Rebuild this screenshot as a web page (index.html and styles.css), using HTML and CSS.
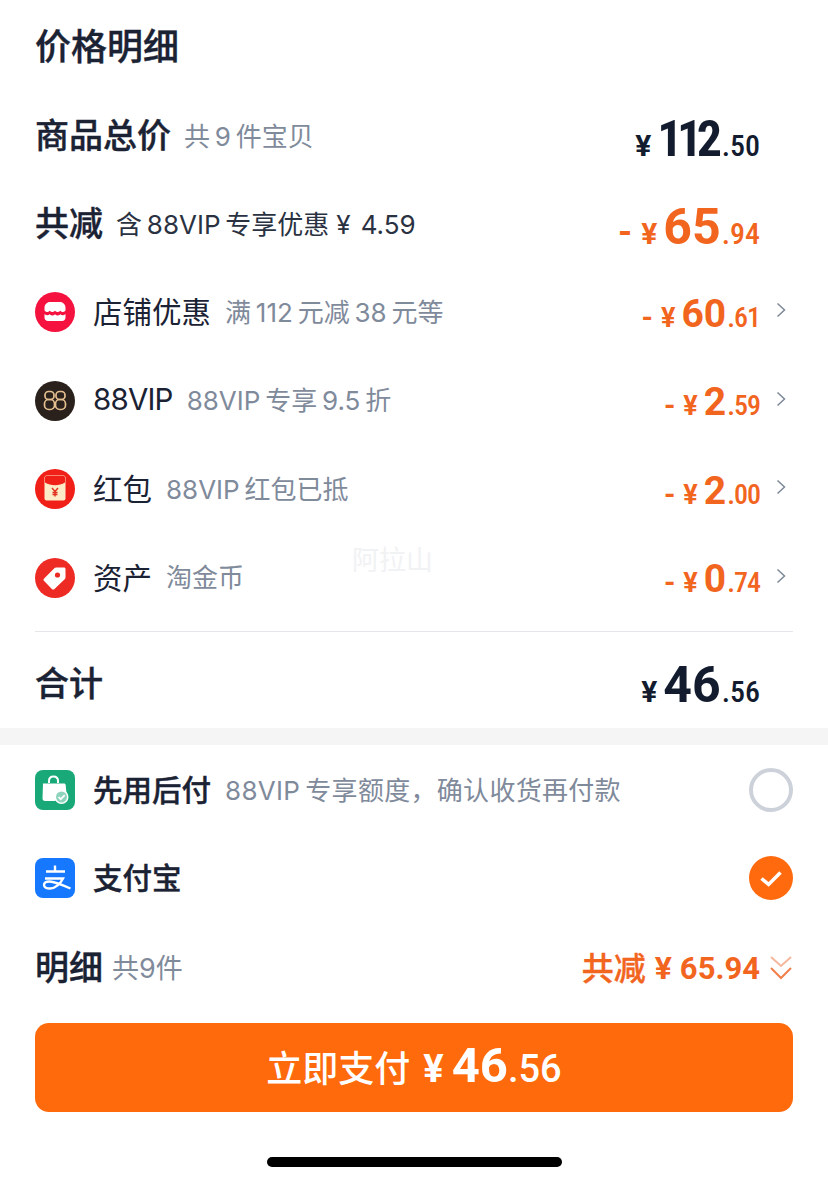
FILE: index.html
```html
<!DOCTYPE html>
<html lang="zh-CN">
<head>
<meta charset="utf-8">
<title>价格明细</title>
<link rel="stylesheet" href="styles.css">
</head>
<body>
<main class="page">
  <section class="panel">
    <h1 class="title">价格明细</h1>
    <div class="row row-main">
      <div class="label"><span class="strong">商品总价</span><span class="sub">共 9 件宝贝</span></div>
      <div class="amount amount-big dark"><span class="yen">¥</span><b class="tight">112</b><span class="dec">.50</span></div>
    </div>
    <div class="row row-main">
      <div class="label"><span class="strong">共减</span><span class="sub dark-sub">含 88VIP 专享优惠<span class="dark-yen">¥</span>4.59</span></div>
      <div class="amount amount-big orange"><span class="minus">-</span><span class="yen">¥</span><b>65</b><span class="dec">.94</span></div>
    </div>

    <div class="row row-item">
      <div class="label">
        <svg class="icon" viewBox="0 0 40 40"><circle cx="20" cy="20" r="20" fill="#f5123f"/><path d="M9.500 18.500V15.500C9.500 12.500 12 10 15 10h10c3 0 5.500 2.500 5.500 5.500v3c-1.700 2-3.500 2-5.200.3-1.700 1.700-3.600 1.700-5.300 0-1.700 1.700-3.600 1.700-5.300 0-1.700 1.700-3.500 1.700-5.200-.3z" fill="#fff"/><path d="M9.500 22c1.700 1.500 3.500 1.500 5.200.3 1.700 1.700 3.600 1.700 5.300 0 1.700 1.700 3.600 1.700 5.300 0 1.700 1.200 3.500 1.200 5.200-.3v3.500c0 2-1.500 3.500-3.500 3.500H13c-2 0-3.500-1.500-3.500-3.500z" fill="#fff"/></svg>
        <span class="name">店铺优惠</span><span class="sub">满 112 元减 38 元等</span>
      </div>
      <div class="amount-wrap">
        <div class="amount amount-small orange"><span class="minus">-</span><span class="yen">¥</span><b>60</b><span class="dec">.61</span></div>
        <svg class="chev" viewBox="0 0 10 16"><path d="M1.500 1.500 8.500 8l-7 6.500" fill="none" stroke="#7d8797" stroke-width="1.500"/></svg>
      </div>
    </div>

    <div class="row row-item">
      <div class="label">
        <svg class="icon" viewBox="0 0 40 40"><circle cx="20" cy="20" r="20" fill="#2a211d"/><g fill="none" stroke="#e5bf8f" stroke-width="1.700"><rect x="10" y="10.500" width="9" height="8" rx="3.500"/><rect x="9.500" y="18.500" width="10" height="10" rx="4.200"/><rect x="21" y="10.500" width="9" height="8" rx="3.500"/><rect x="20.500" y="18.500" width="10" height="10" rx="4.200"/></g></svg>
        <span class="name name-latin">88VIP</span><span class="sub">88VIP 专享 9.5 折</span>
      </div>
      <div class="amount-wrap">
        <div class="amount amount-small orange"><span class="minus">-</span><span class="yen">¥</span><b>2</b><span class="dec">.59</span></div>
        <svg class="chev" viewBox="0 0 10 16"><path d="M1.500 1.500 8.500 8l-7 6.500" fill="none" stroke="#7d8797" stroke-width="1.500"/></svg>
      </div>
    </div>

    <div class="row row-item">
      <div class="label">
        <svg class="icon" viewBox="0 0 40 40"><circle cx="20" cy="20" r="20" fill="#f01f17"/><rect x="9.500" y="6.500" width="21" height="25" rx="2" fill="#fdebc8"/><path d="M10 8.500c0-1 .6-1.500 1.500-1.500h17c.9 0 1.500.5 1.500 1.500v5c-6 3.500-14 3.500-20 0z" fill="#f01f17"/><path d="M17 19l3 3.500 3-3.500M20 22.500V27.500M17.500 23.500h5M17.500 25.500h5" fill="none" stroke="#e0301e" stroke-width="1.400"/></svg>
        <span class="name">红包</span><span class="sub">88VIP 红包已抵</span>
      </div>
      <div class="amount-wrap">
        <div class="amount amount-small orange"><span class="minus">-</span><span class="yen">¥</span><b>2</b><span class="dec">.00</span></div>
        <svg class="chev" viewBox="0 0 10 16"><path d="M1.500 1.500 8.500 8l-7 6.500" fill="none" stroke="#7d8797" stroke-width="1.500"/></svg>
      </div>
    </div>

    <div class="row row-item">
      <div class="label">
        <svg class="icon" viewBox="0 0 40 40"><circle cx="20" cy="20" r="20" fill="#ee2a24"/><path d="M21 9.500h8c.9 0 1.500.6 1.500 1.500v8.500c0 .6-.2 1-.6 1.400L19.500 31c-.8.8-1.800.8-2.600 0l-7.800-8c-.8-.8-.8-1.800 0-2.600L19.600 10.100c.4-.4.900-.6 1.400-.6z" fill="#fff"/><circle cx="22.500" cy="17" r="2.600" fill="#ee2a24"/></svg>
        <span class="name">资产</span><span class="sub">淘金币</span>
      </div>
      <div class="amount-wrap">
        <div class="amount amount-small orange"><span class="minus">-</span><span class="yen">¥</span><b>0</b><span class="dec">.74</span></div>
        <svg class="chev" viewBox="0 0 10 16"><path d="M1.500 1.500 8.500 8l-7 6.500" fill="none" stroke="#7d8797" stroke-width="1.500"/></svg>
      </div>
      <span class="watermark">阿拉山</span>
    </div>

    <div class="row row-total">
      <div class="label"><span class="strong">合计</span></div>
      <div class="amount amount-big dark"><span class="yen">¥</span><b>46</b><span class="dec">.56</span></div>
    </div>
  </section>

  <div class="band"></div>

  <section class="panel pay">
    <div class="row row-pay">
      <div class="label">
        <svg class="icon" viewBox="0 0 40 40"><rect width="40" height="40" rx="8" fill="#19a878"/><path d="M8 13.500h21c1 0 1.600.6 1.700 1.500l.8 9A8 8 0 0 0 20.500 31H10c-1.500 0-2.500-1-2.500-2.500z" fill="#fff"/><path d="M14 13v-2c0-3 2-4.500 4.500-4.500S23 8 23 11v2" fill="none" stroke="#fff" stroke-width="2"/><circle cx="26.500" cy="27" r="7" fill="#fff"/><circle cx="26.500" cy="27" r="5.500" fill="#8ed3bb"/><path d="M23.500 27l2.200 2.200 4-4" fill="none" stroke="#fff" stroke-width="1.700"/></svg>
        <span class="name semi">先用后付</span><span class="sub">88VIP 专享额度，确认收货再付款</span>
      </div>
      <span class="radio"></span>
    </div>
    <div class="row row-pay">
      <div class="label">
        <svg class="icon" viewBox="0 0 40 40"><rect width="40" height="40" rx="8" fill="#1677ff"/><path d="M11 13.500h19M20 7.500v6M10 20.500h18c-2.500 5-7.500 10-13 10-3.500 0-6-1.200-6-3.500s2.500-3.500 5.500-3.500c5 0 13 3.500 21 7" fill="none" stroke="#fff" stroke-width="2.400"/></svg>
        <span class="name semi">支付宝</span>
      </div>
      <span class="radio radio-on"><svg viewBox="0 0 20 16"><path d="M2 8l6 5L18 3" fill="none" stroke="#fff" stroke-width="3"/></svg></span>
    </div>
    <div class="row row-detail">
      <div class="label"><span class="strong">明细</span><span class="sub sub-count">共9件</span></div>
      <div class="cut-sum">
        <span class="cut-text">共减</span><span class="cut-yen">¥</span><span class="cut-num">65.94</span>
        <svg class="dbl" viewBox="0 0 24 26"><path d="M2 2l10 9 10-9" fill="none" stroke="#f5b79b" stroke-width="2"/><path d="M2 13l10 10 10-10" fill="none" stroke="#f07f4a" stroke-width="2"/></svg>
      </div>
    </div>
    <button class="pay-btn"><span class="pay-text">立即支付</span><span class="pay-yen">¥</span><b class="pay-int">46</b><span class="pay-dec">.56</span></button>
  </section>
  <div class="home-wrap"><span class="home"></span></div>
</main>
</body>
</html>
```
FILE: styles.css
```css
* { box-sizing: border-box; }
html, body { margin: 0; padding: 0; background: #fff; }
body {
  font-family: "Inter", "Noto Sans CJK SC", sans-serif;
  color: #1a2233;
}
.page { width: 828px; height: 1184px; overflow: hidden; display: flex; flex-direction: column; }
.panel { padding: 0 35px; display: flex; flex-direction: column; }
.title { margin: 0; height: 92px; padding-top: 2px; font-size: 36px; line-height: 90px; font-weight: 500; color: #1a2233; -webkit-text-stroke: .4px #1a2233; }
.row { display: flex; align-items: center; justify-content: space-between; position: relative; }
.row-main { height: 88px; }
.row-item { height: 88.500px; }
.row-pay { height: 88px; }
.row-detail { height: 92px; margin-bottom: 9px; }
.row-total { height: 97px; border-top: 1px solid #e4e6ea; margin-top: 9px; }
.row-total .strong { padding: 3px 0 0; }
.row-total .amount { margin-top: 10px; }
.label { display: flex; align-items: center; }
.strong { font-size: 34px; font-weight: 500; padding-bottom: 5px; -webkit-text-stroke: .4px #1a2233; }
.sub { font-size: 26px; color: #7f8a9b; margin-left: 13px; font-weight: 400; white-space: nowrap; word-spacing: -2.500px; padding-bottom: 4px; }
.dark-sub { color: #2a3242; }
.dark-yen { margin: 0 10px 0 7px; }
.sub-count { margin-left: 9px; font-size: 27px; }
.name { font-size: 29.500px; font-weight: 400; color: #1a2233; margin-left: 18px; white-space: nowrap; padding-bottom: 4px; }
.name-latin { letter-spacing: -.8px; }
.name + .sub { margin-left: 14px; }
.semi { font-weight: 500; -webkit-text-stroke: .4px #1a2233; }
.semi + .sub { letter-spacing: .3px; }
.icon { width: 40px; height: 40px; flex: none; }
.amount { font-family: "Roboto", sans-serif; display: flex; align-items: baseline; white-space: nowrap; }
.amount b { font-weight: 700; }
.amount .dec { font-weight: 500; font-stretch: 78%; }
.amount .yen { font-weight: 700; }
.amount .minus { font-weight: 700; }
.amount-big { margin-right: 33px; margin-top: 6px; }
.amount-big b { font-size: 50px; font-stretch: 91%; }
.amount-big b.tight { font-stretch: 87%; letter-spacing: -5.500px; }
.amount-big b.tight + .dec { margin-left: 5px; }
.amount-big .dec { font-size: 30px; margin-left: 1px; }
.amount-big .yen { font-size: 30px; margin-right: 6px; }
.amount-big .minus { font-size: 36px; margin-right: 9px; }
.amount-small b { font-size: 39px; font-stretch: 90%; }
.amount-small .dec { font-size: 28px; margin-left: 1px; letter-spacing: -1px; }
.amount-small .yen { font-size: 27px; margin-right: 6px; }
.amount-small .minus { font-size: 29px; margin-right: 8px; }
.amount-wrap { display: flex; align-items: center; }
.amount-wrap .amount { margin-top: 3px; }
.chev { width: 10px; height: 16px; margin: 0 7px 0 16px; flex: none; position: relative; top: -2px; }
.dark { color: #131c2e; }
.orange { color: #f2651f; }
.watermark { position: absolute; left: 317px; top: 5px; font-size: 27px; color: #f1f2f4; }
.band { height: 17px; background: #f5f5f6; flex: none; }
.pay { padding-top: 1px; }
.radio { width: 44px; height: 44px; border-radius: 50%; border: 4px solid #cdd2da; flex: none; display: flex; align-items: center; justify-content: center; }
.radio-on { background: #ff6a0f; border: 0; }
.radio-on svg { width: 24px; height: 19px; }
.cut-sum { display: flex; align-items: center; color: #f2651f; }
.cut-text { font-size: 32px; font-weight: 500; padding-bottom: 4px; -webkit-text-stroke: .4px #f2651f; }
.cut-yen { font-family: "Roboto", sans-serif; font-size: 32px; font-weight: 700; margin: 0 8px 0 9px; }
.cut-num { font-family: "Roboto", sans-serif; font-size: 31px; font-weight: 700; }
.dbl { width: 24px; height: 26px; margin-left: 9px; }
.pay-btn {
  height: 89px; border: 0; border-radius: 14px; background: #ff6a0c; color: #fff;
  display: flex; align-items: baseline; justify-content: center; padding: 14px 0 0;
  font-family: inherit;
}
.pay-text { font-size: 36px; font-weight: 500; margin-right: 13px; }
.pay-yen { font-family: "Roboto", sans-serif; font-size: 38px; font-weight: 700; margin-right: 8px; }
.pay-int { font-family: "Roboto", sans-serif; font-size: 49px; font-weight: 700; }
.pay-dec { font-family: "Roboto", sans-serif; font-size: 38px; font-weight: 500; }
.home-wrap { display: flex; justify-content: center; padding-top: 45px; }
.home { width: 295px; height: 10px; border-radius: 5px; background: #000; }
```
